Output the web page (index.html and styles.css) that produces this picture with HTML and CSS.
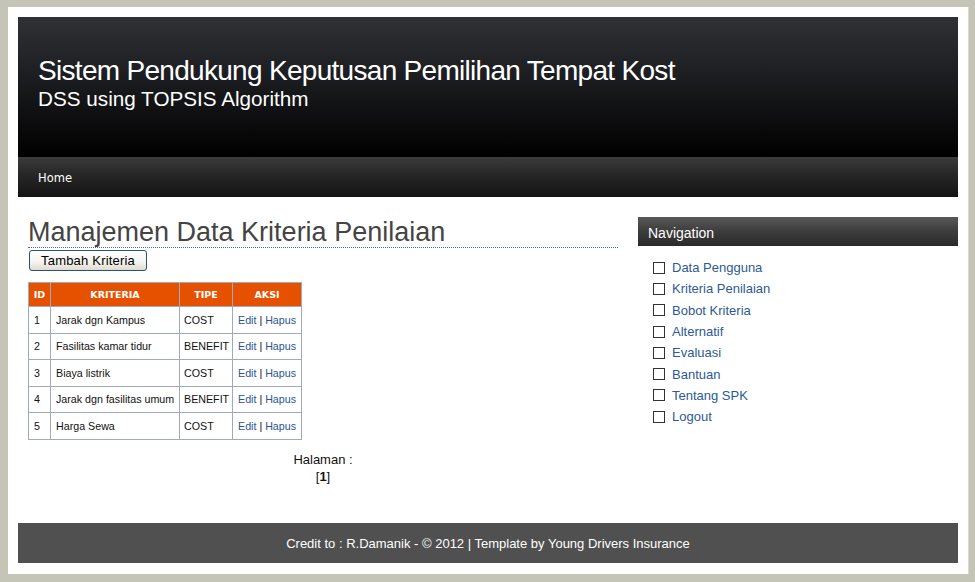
FILE: index.html
```html
<!DOCTYPE html>
<html>
<head>
<meta charset="utf-8">
<title>SPK Pemilihan Tempat Kost</title>
<link rel="stylesheet" href="styles.css">
</head>
<body>
<div class="page">
  <div class="header">
    <h1 class="site-title">Sistem Pendukung Keputusan Pemilihan Tempat Kost</h1>
    <div class="site-sub">DSS using TOPSIS Algorithm</div>
  </div>
  <div class="menu"><a href="#">Home</a></div>
  <div class="content">
    <div class="main">
      <h2 class="page-title">Manajemen Data Kriteria Penilaian</h2>
      <button class="btn" type="button">Tambah Kriteria</button>
      <table class="grid">
        <thead>
          <tr><th class="c-id">ID</th><th class="c-k">KRITERIA</th><th class="c-t">TIPE</th><th class="c-a">AKSI</th></tr>
        </thead>
        <tbody>
          <tr><td>1</td><td>Jarak dgn Kampus</td><td>COST</td><td><a href="#">Edit</a> | <a href="#">Hapus</a></td></tr>
          <tr><td>2</td><td>Fasilitas kamar tidur</td><td>BENEFIT</td><td><a href="#">Edit</a> | <a href="#">Hapus</a></td></tr>
          <tr><td>3</td><td>Biaya listrik</td><td>COST</td><td><a href="#">Edit</a> | <a href="#">Hapus</a></td></tr>
          <tr><td>4</td><td>Jarak dgn fasilitas umum</td><td>BENEFIT</td><td><a href="#">Edit</a> | <a href="#">Hapus</a></td></tr>
          <tr><td>5</td><td>Harga Sewa</td><td>COST</td><td><a href="#">Edit</a> | <a href="#">Hapus</a></td></tr>
        </tbody>
      </table>
      <div class="paging">Halaman :<br>[<b>1</b>]</div>
    </div>
    <div class="side">
      <div class="side-head">Navigation</div>
      <ul class="nav">
        <li><span class="box"></span><a href="#">Data Pengguna</a></li>
        <li><span class="box"></span><a href="#">Kriteria Penilaian</a></li>
        <li><span class="box"></span><a href="#">Bobot Kriteria</a></li>
        <li><span class="box"></span><a href="#">Alternatif</a></li>
        <li><span class="box"></span><a href="#">Evaluasi</a></li>
        <li><span class="box"></span><a href="#">Bantuan</a></li>
        <li><span class="box"></span><a href="#">Tentang SPK</a></li>
        <li><span class="box"></span><a href="#">Logout</a></li>
      </ul>
    </div>
  </div>
  <div class="footer">Credit to : R.Damanik - © 2012 | Template by Young Drivers Insurance</div>
</div>
</body>
</html>
```
FILE: styles.css
```css
html, body {
  margin: 0;
  padding: 0;
}
body {
  background: #c4c5b7;
  font-family: "Liberation Sans", Arial, sans-serif;
  color: #222;
}
.page {
  width: 940px;
  margin: 7px 0 0 8px;
  padding: 10px 10px 11px 10px;
  background: #fff;
  border-right: 1px solid #d8d9cf;
}
.header {
  height: 140px;
  box-sizing: border-box;
  padding: 38px 0 0 20px;
  background: linear-gradient(to bottom, #2f3135 0%, #1b1c1f 45%, #0a0a0b 80%, #000 100%);
  color: #fff;
}
.site-title {
  margin: 0;
  font-weight: normal;
  font-size: 28px;
  line-height: 32px;
  letter-spacing: -0.7px;
}
.site-sub {
  font-size: 20.7px;
  line-height: 24px;
  margin-top: 0;
}
.menu {
  height: 40px;
  box-sizing: border-box;
  padding-left: 20px;
  background: linear-gradient(to bottom, #3b3b3b 0%, #262626 45%, #141414 100%);
  display: flex;
  align-items: center;
}
.menu a {
  color: #fff;
  text-decoration: none;
  font-family: "DejaVu Sans", sans-serif;
  font-size: 11.5px;
  margin-top: 1px;
}
.content {
  display: flex;
  min-height: 326px;
  box-sizing: border-box;
  padding: 20px 0 0 10px;
}
.main {
  width: 590px;
}
.page-title {
  margin: 0;
  font-weight: normal;
  font-size: 27px;
  line-height: 30px;
  color: #444;
  border-bottom: 1px dotted #4a6a9a;
}
.btn {
  margin: 2px 0 0 1px;
  height: 21px;
  padding: 0 11px;
  font-family: "Liberation Sans", Arial, sans-serif;
  font-size: 13px;
  letter-spacing: 0.2px;
  color: #000;
  border: 1px solid #2c4f7c;
  border-radius: 3px;
  background: linear-gradient(to bottom, #ffffff 0%, #f4f3ee 60%, #dedbcf 100%);
}
.grid {
  margin-top: 11px;
  border-collapse: collapse;
  font-family: "Liberation Sans", Arial, sans-serif;
  font-size: 10.7px;
  border: 1px solid #a3a9bd;
}
.grid th {
  background: #e65100;
  color: #fff;
  font-family: "DejaVu Sans", sans-serif;
  font-weight: bold;
  font-size: 9.5px;
  height: 24px;
  box-sizing: border-box;
  padding: 0;
  border: 1px solid #a3a9bd;
  text-align: center;
}
.grid td {
  height: 26.5px;
  box-sizing: border-box;
  padding: 0 0 0 5px;
  border: 1px solid #a3a9bd;
  color: #111;
}
.c-id { width: 22px; }
.c-k { width: 129px; }
.c-t { width: 53px; }
.c-a { width: 69px; }
.grid td:nth-child(3) { padding-left: 4px; }
.grid a {
  color: #2a5595;
  text-decoration: none;
}
.paging {
  margin-top: 11px;
  text-align: center;
  font-size: 13px;
  line-height: 17px;
  color: #111;
}
.side {
  width: 320px;
  margin-left: 20px;
}
.side-head {
  height: 29px;
  box-sizing: border-box;
  padding-left: 10px;
  padding-top: 2px;
  display: flex;
  align-items: center;
  color: #fff;
  font-size: 14px;
  background: linear-gradient(to bottom, #585858 0%, #3c3c3c 50%, #2a2a2a 100%);
}
.nav {
  list-style: none;
  margin: 11px 0 0 0;
  padding: 0 0 0 15px;
}
.nav li {
  display: flex;
  align-items: center;
  height: 21.3px;
  font-size: 13px;
}
.box {
  width: 10px;
  height: 10px;
  border: 1px solid #333;
  margin-right: 7px;
}
.nav a {
  color: #2d5a96;
  text-decoration: none;
}
.footer {
  height: 40px;
  background: #505050;
  color: #fff;
  font-size: 13px;
  line-height: 42px;
  text-align: center;
}
```
